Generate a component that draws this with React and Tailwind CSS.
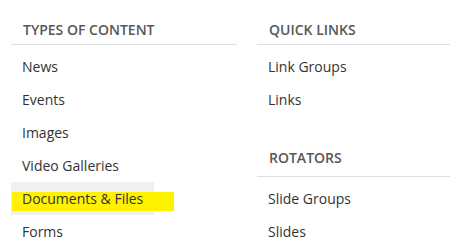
import React from 'react';

const sections = {
  left: [{ title: 'Types of Content', items: ['News', 'Events', 'Images', 'Video Galleries', 'Documents & Files', 'Forms'] }],
  right: [
    { title: 'Quick Links', items: ['Link Groups', 'Links'] },
    { title: 'Rotators', items: ['Slide Groups', 'Slides'] },
  ],
};

const Item = ({ label }) => {
  const active = label === 'Documents & Files';
  return (
    <li className="h-[33px] flex items-center">
      <a
        href="#"
        className={`relative h-[33px] flex items-center px-[11px] text-[14px] text-[#333] ${active ? 'bg-[#f0f0f0]' : ''}`}
      >
        {active && (
          <span className="absolute left-[1px] top-[10px] h-[19px] w-[162px] bg-[#fff200]"></span>
        )}
        <span className="relative">{label}</span>
      </a>
    </li>
  );
};

const Section = ({ title, items, first }) => (
  <div>
    <h3
      className={`border-b border-[#dedede] px-3 text-[14px] leading-[19px] font-semibold uppercase text-[#575757] flex items-end ${first ? 'h-[29px] pb-[5px]' : 'h-[61px] pb-[9px]'}`}
    >
      {title}
    </h3>
    <ul className="mt-[5px]">
      {items.map((item) => (
        <Item key={item} label={item} />
      ))}
    </ul>
  </div>
);

export default function App() {
  return (
    <div className="w-[450px] h-[251px] overflow-hidden bg-white pt-[16px] pl-[11px] flex" style={{ fontFamily: '"Open Sans", sans-serif' }}>
      <div className="w-[226px]">
        {sections.left.map((s) => (
          <Section key={s.title} {...s} first />
        ))}
      </div>
      <div className="flex-1 ml-[20px]">
        {sections.right.map((s, i) => (
          <Section key={s.title} {...s} first={i === 0} />
        ))}
      </div>
    </div>
  );
}
